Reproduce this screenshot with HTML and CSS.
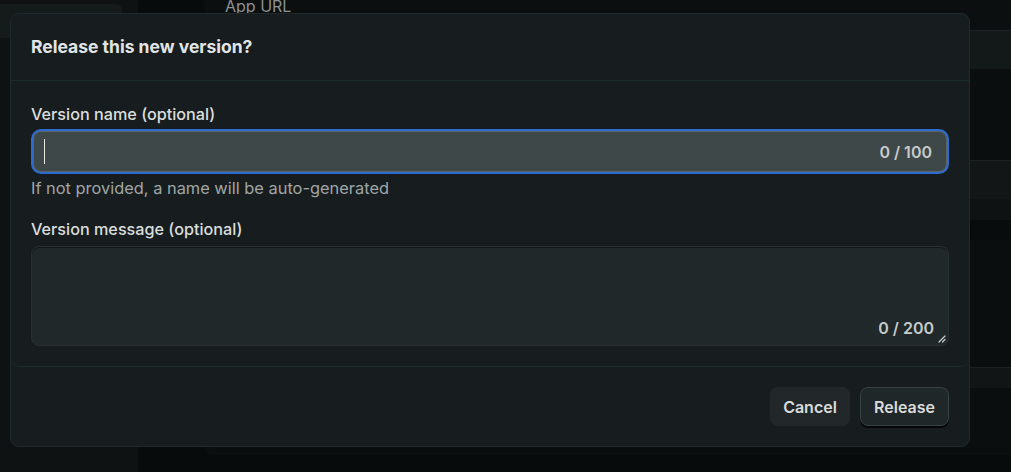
FILE: index.html
```html
<!DOCTYPE html>
<html lang="en">
<head>
<meta charset="utf-8">
<title>Release this new version?</title>
<link rel="stylesheet" href="styles.css">
</head>
<body>
<div class="app">
  <aside class="sidebar">
    <div class="side-card"></div>
  </aside>
  <div class="gutter"></div>
  <main class="main">
    <div class="main-label"><span class="main-label-text">App URL</span></div>
    <div class="row row-field"></div>
    <div class="row row-space1"></div>
    <div class="row row-field2"></div>
    <div class="row row-mid"></div>
    <div class="row row-dark"></div>
    <div class="row row-space2"></div>
    <div class="row row-field3"></div>
    <div class="row row-end"></div>
  </main>
</div>

<div class="modal" role="dialog" aria-labelledby="modal-title">
  <header class="modal-header">
    <h2 id="modal-title" class="modal-title">Release this new version?</h2>
  </header>
  <section class="modal-body">
    <label class="field-label">Version name (optional)</label>
    <div class="input focused">
      <span class="caret"></span>
      <span class="counter">0 / 100</span>
    </div>
    <p class="helper">If not provided, a name will be auto-generated</p>
    <label class="field-label second">Version message (optional)</label>
    <div class="textarea">
      <span class="counter">0 / 200</span>
      <svg class="grip" width="8" height="8" viewBox="0 0 8 8" aria-hidden="true">
        <path d="M7 1 L1 7 M7 4.5 L4.5 7" stroke="#c9cdce" stroke-width="1.2" stroke-linecap="round"/>
      </svg>
    </div>
  </section>
  <footer class="modal-footer">
    <button class="btn btn-ghost">Cancel</button>
    <button class="btn btn-primary">Release</button>
  </footer>
</div>
</body>
</html>
```

FILE: styles.css
```css
* { box-sizing: border-box; }

html, body {
  margin: 0;
  padding: 0;
  width: 1011px;
  height: 472px;
  overflow: hidden;
  background: #0b0e0f;
  font-family: Inter, "Noto Sans", "Liberation Sans", sans-serif;
}

/* background app */
.app {
  display: grid;
  grid-template-columns: 138px 67px 1fr;
  height: 472px;
}

.sidebar {
  background: #0e1213;
  padding-top: 4px;
}

.side-card {
  width: 122px;
  height: 34px;
  background: #151a1b;
  border-radius: 0 6px 6px 0;
}

.gutter { background: #080b0c; }

.main {
  display: flex;
  flex-direction: column;
  background: #080b0c;
}

.main-label {
  height: 30px;
  padding: 0 0 0 20px;
  background: #0b0f10;
  overflow: hidden;
}

.main-label-text {
  display: block;
  font-size: 16px;
  line-height: 16px;
  margin-top: -2px;
  color: #8b9192;
}

.row { background: #0b0e0f; }
.row-field { height: 39px; background: #131819; border-top: 1px solid #1d2324; }
.row-space1 { height: 91px; }
.row-field2 { height: 39px; background: #121617; border-top: 1px solid #1d2223; }
.row-mid { height: 21px; background: #0f1213; }
.row-dark { height: 20px; background: #090c0d; }
.row-space2 { height: 127px; }
.row-field3 { height: 21px; background: #111516; border-top: 1px solid #1b2021; }
.row-end { height: 67px; border-radius: 0 0 0 8px; }

/* modal */
.modal {
  position: absolute;
  left: 10px;
  top: 13px;
  width: 960px;
  height: 434px;
  background: #171d1e;
  border: 1px solid #1e2a2c;
  border-radius: 9px;
  display: flex;
  flex-direction: column;
  color: #dfe2e2;
}

.modal-header {
  height: 67px;
  padding: 0 20px;
  display: flex;
  align-items: center;
  border-bottom: 1px solid #1b2c2e;
}

.modal-title {
  margin: 0;
  font-size: 17.5px;
  font-weight: 700;
  color: #e2e5e5;
  position: relative;
  top: -1px;
}

.modal-body {
  padding: 22px 20px 0 20px;
  height: 286px;
  border-bottom: 1px solid #1b2c2e;
  border-radius: 0 0 9px 9px;
  display: flex;
  flex-direction: column;
}

.field-label {
  display: block;
  font-size: 16.2px;
  font-weight: 500;
  line-height: 20px;
  color: #dadddd;
  margin-top: 1px;
  margin-bottom: 7px;
}

.input {
  height: 41px;
  border-radius: 8px;
  background: #3e4849;
  border: 1px solid #5a6566;
  box-shadow: 0 0 0 2px #2c6bd0;
  margin: 0 2px;
  display: flex;
  align-items: center;
  padding: 0 14px 0 10px;
}

.caret {
  width: 1px;
  height: 25px;
  background: #e6e8e8;
}

.counter {
  margin-left: auto;
  font-size: 16px;
  font-weight: 600;
  color: #c6cbcb;
}

.helper {
  margin: 6px 0 0 0;
  font-size: 16.4px;
  line-height: 21px;
  color: #a0a6a7;
  margin-bottom: 19px;
}

.textarea {
  position: relative;
  height: 100px;
  border-radius: 8px;
  background: #212829;
  border: 1px solid #283032;
  box-shadow: inset 0 1px 0 #111617;
  display: flex;
  align-items: flex-end;
  padding: 0 14px 7px 14px;
}

.grip {
  position: absolute;
  right: 2px;
  bottom: 2px;
}

.modal-footer {
  flex: 1;
  display: flex;
  justify-content: flex-end;
  align-items: flex-start;
  gap: 10px;
  padding: 20px 20px 0 20px;
}

.btn {
  font-family: inherit;
  font-size: 16px;
  font-weight: 600;
  color: #d9dcdc;
  height: 39px;
  border-radius: 8px;
  cursor: pointer;
  padding: 0;
}

.btn-ghost {
  width: 80px;
  background: #222829;
  border: none;
}

.btn-primary {
  width: 89px;
  background: #202728;
  border: 1px solid #384244;
  box-shadow: 0 2px 0 #050707;
}
```
